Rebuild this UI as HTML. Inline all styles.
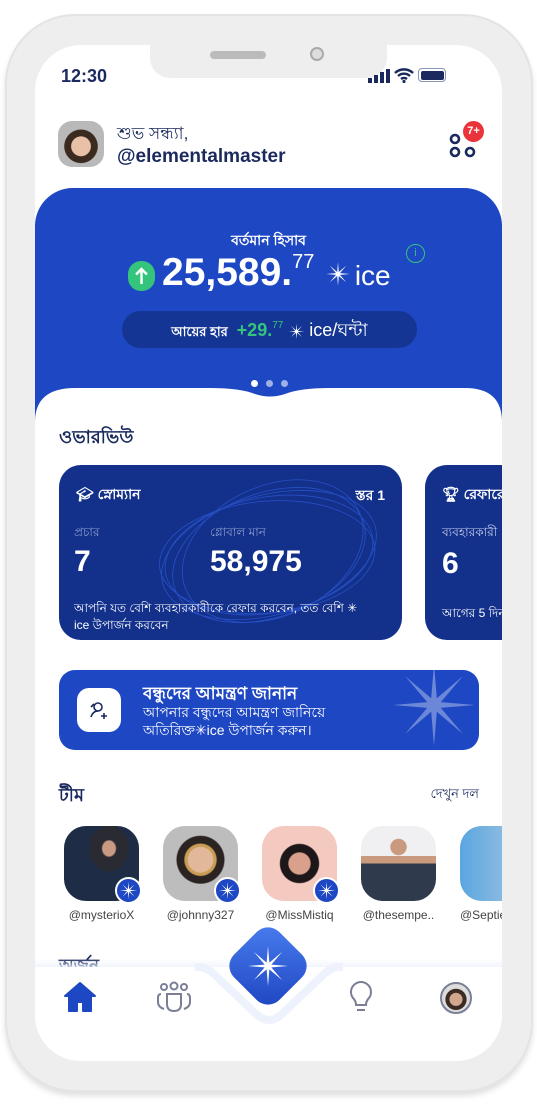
<!DOCTYPE html>
<html><head><meta charset="utf-8"><style>
*{margin:0;padding:0;box-sizing:border-box}
body{width:537px;height:1106px;background:#fff;position:relative;overflow:hidden;font-family:"Liberation Sans","DejaVu Sans",sans-serif;color:#1b2a5e}
.abs{position:absolute}
.frame{left:5px;top:14px;width:528px;height:1078px;border-radius:70px;background:#eeeeee;box-shadow:0 4px 6px rgba(0,0,0,.12),inset 0 0 0 2px #e4e4e4}
.screen{left:35px;top:45px;width:467px;height:1016px;border-radius:46px;background:#fff;overflow:hidden}
.b{font-weight:bold}
.star{display:inline-block;vertical-align:middle}
.bd{width:27px;height:27px;border-radius:50%;background:#1e47c3;border:2px solid #fff;display:flex;align-items:center;justify-content:center}
</style></head><body>
<div class="abs frame"></div>
<div class="abs screen">
  <!-- notch -->
  <div class="abs" style="left:115px;top:-2px;width:237px;height:35px;background:#eeeeee;border-radius:0 0 20px 20px"></div>
  <div class="abs" style="left:175px;top:6px;width:56px;height:8px;border-radius:4px;background:#bbb"></div>
  <div class="abs" style="left:275px;top:2px;width:14px;height:14px;border-radius:50%;background:#ddd;border:2px solid #aaa"></div>
  <div class="abs b" style="left:26px;top:21px;font-size:18px;color:#1b2a5e">12:30</div>
  <!-- signal -->
  <div class="abs" style="left:333px;top:33px;width:4px;height:5px;background:#1b2a5e"></div>
  <div class="abs" style="left:339px;top:30px;width:4px;height:8px;background:#1b2a5e"></div>
  <div class="abs" style="left:345px;top:27px;width:4px;height:11px;background:#1b2a5e"></div>
  <div class="abs" style="left:351px;top:24px;width:4px;height:14px;background:#1b2a5e"></div>
  <svg class="abs" style="left:359px;top:22px" width="20" height="16" viewBox="0 0 20 16"><path d="M1 6a13 13 0 0 1 18 0M4 9a9 9 0 0 1 12 0M7 12a5 5 0 0 1 6 0" stroke="#1b2a5e" stroke-width="2.4" fill="none"/><circle cx="10" cy="14.5" r="1.6" fill="#1b2a5e"/></svg>
  <div class="abs" style="left:383px;top:23px;width:28px;height:14px;border:1.5px solid #8a94b5;border-radius:4px;padding:1.5px"><div style="width:100%;height:100%;background:#1b2a5e;border-radius:2px"></div></div>
  <!-- header -->
  <div class="abs" style="left:23px;top:76px;width:46px;height:46px;border-radius:14px;background:radial-gradient(circle at 50% 55%,#e8c1a6 0 28%,#3b2a20 30% 48%,#b9b9b9 50%)"></div>
  <div class="abs" style="left:82px;top:76px;font-size:17px">শুভ সন্ধ্যা,</div>
  <div class="abs b" style="left:82px;top:101px;font-size:19px">@elementalmaster</div>
  <svg class="abs" style="left:412px;top:86px" width="32" height="28" viewBox="0 0 32 28"><g fill="none" stroke="#1b2a5e" stroke-width="2.6"><circle cx="8" cy="8" r="4"/><circle cx="8" cy="21" r="4"/><circle cx="23" cy="21" r="4"/></g></svg>
  <div class="abs b" style="left:428px;top:76px;width:21px;height:21px;border-radius:50%;background:#e8343a;color:#fff;font-size:11px;text-align:center;line-height:21px">7+</div>
  <!-- blue card -->
  <div class="abs" style="left:0;top:143px;width:467px;height:240px;background:#1e47c3;border-radius:38px 38px 0 0"></div>
  <div class="abs b" style="left:0;top:184px;width:467px;text-align:center;color:#fff;font-size:14px">বর্তমান হিসাব</div>
  <div class="abs" style="left:93px;top:216px;width:27px;height:30px;border-radius:13px;background:#34c47c"></div>
  <svg class="abs" style="left:98px;top:221px" width="17" height="20" viewBox="0 0 17 20"><path d="M8.5 18V3M3 8.5l5.5-5.5 5.5 5.5" stroke="#fff" stroke-width="2.4" fill="none"/></svg>
  <div class="abs" style="left:127px;top:206px;color:#fff;white-space:nowrap"><span class="b" style="font-size:39px">25,589.</span><span style="font-size:20px;vertical-align:17px">77</span>
   <svg class="star" width="26" height="26" viewBox="-11 -11 22 22" style="margin:0 4px 0 6px;vertical-align:-2px"><polygon fill="#fff" points="10,0 1.66,.69 7.07,7.07 .69,1.66 0,10 -.69,1.66 -7.07,7.07 -1.66,.69 -10,0 -1.66,-.69 -7.07,-7.07 -.69,-1.66 0,-10 .69,-1.66 7.07,-7.07 1.66,-.69"/></svg><span style="font-size:28px">ice</span></div>
  <div class="abs" style="left:371px;top:199px;width:19px;height:19px;border-radius:50%;border:1.5px solid #34c47c;color:#34c47c;font-size:11px;text-align:center;line-height:16px">i</div>
  <div class="abs" style="left:87px;top:266px;width:295px;height:37px;border-radius:19px;background:#143593"></div>
  <div class="abs" style="left:87px;top:271px;width:295px;text-align:center;color:#fff;white-space:nowrap"><span class="b" style="font-size:13px">আয়ের হার</span>&nbsp; <span style="color:#34c47c;font-size:18px" class="b">+29.</span><span style="color:#34c47c;font-size:10px;vertical-align:8px">77</span>
   <svg class="star" width="17" height="17" viewBox="-11 -11 22 22"><polygon fill="#fff" points="10,0 1.66,.69 7.07,7.07 .69,1.66 0,10 -.69,1.66 -7.07,7.07 -1.66,.69 -10,0 -1.66,-.69 -7.07,-7.07 -.69,-1.66 0,-10 .69,-1.66 7.07,-7.07 1.66,-.69"/></svg> <span style="font-size:18px">ice/ঘন্টা</span></div>
  <div class="abs" style="left:216px;top:335px;width:7px;height:7px;border-radius:50%;background:#fff"></div>
  <div class="abs" style="left:231px;top:335px;width:7px;height:7px;border-radius:50%;background:#9db0e8"></div>
  <div class="abs" style="left:246px;top:335px;width:7px;height:7px;border-radius:50%;background:#9db0e8"></div>
  <svg class="abs" style="left:0;top:335px" width="467" height="60" viewBox="0 0 467 60"><path d="M0 60V42Q0 8 40 8H175Q205 8 220 14Q235 19 250 14Q265 8 295 8H430Q467 8 467 42V60Z" fill="#fff"/></svg>
  <div class="abs" style="left:0;top:390px;width:467px;height:600px;background:#fff"></div>
  <div class="abs b" style="left:24px;top:378px;font-size:18px">ওভারভিউ</div>
  <!-- card1 -->
  <div class="abs" style="left:24px;top:420px;width:343px;height:175px;border-radius:22px;background:#13318b;overflow:hidden;color:#fff">
    <svg class="abs" style="left:90px;top:10px" width="240" height="160" viewBox="0 0 240 160"><g fill="none" stroke="#2d58d6" stroke-width=".8" opacity=".8"><ellipse cx="120" cy="80" rx="110" ry="60" transform="rotate(-15 120 80)"/><ellipse cx="120" cy="80" rx="105" ry="58" transform="rotate(-10 120 80)"/><ellipse cx="120" cy="80" rx="100" ry="62" transform="rotate(-20 120 80)"/><ellipse cx="125" cy="78" rx="95" ry="65" transform="rotate(-25 120 80)"/><ellipse cx="118" cy="82" rx="108" ry="56" transform="rotate(-5 120 80)"/></g></svg>
    <div class="abs b" style="left:17px;top:18px;font-size:14px">🎓︎ স্নোম্যান</div>
    <div class="abs b" style="right:17px;top:19px;font-size:14px">স্তর 1</div>
    <div class="abs" style="left:15px;top:59px;font-size:12px;color:#8c9dd0">প্রচার</div>
    <div class="abs" style="left:151px;top:59px;font-size:12px;color:#8c9dd0">গ্লোবাল মান</div>
    <div class="abs b" style="left:15px;top:80px;font-size:30px">7</div>
    <div class="abs b" style="left:151px;top:80px;font-size:30px">58,975</div>
    <div class="abs" style="left:15px;top:135px;width:300px;font-size:12px;line-height:17px">আপনি যত বেশি ব্যবহারকারীকে রেফার করবেন, তত বেশি ✳ ice উপার্জন করবেন</div>
  </div>
  <div class="abs" style="left:390px;top:420px;width:100px;height:175px;border-radius:22px;background:#13318b;color:#fff;overflow:hidden">
    <div class="abs b" style="left:17px;top:18px;font-size:14px;white-space:nowrap">🏆︎ রেফারেল</div>
    <div class="abs" style="left:17px;top:59px;font-size:12px;color:#c6cfee;white-space:nowrap">ব্যবহারকারী</div>
    <div class="abs b" style="left:17px;top:82px;font-size:30px">6</div>
    <div class="abs" style="left:17px;top:140px;font-size:12px;white-space:nowrap">আগের 5 দিন</div>
  </div>
  <!-- invite -->
  <div class="abs" style="left:24px;top:625px;width:420px;height:80px;border-radius:16px;background:#1e47c3;overflow:hidden;color:#fff">
    <svg class="abs" style="left:330px;top:-10px" width="90" height="90" viewBox="-11 -11 22 22" opacity=".35"><polygon fill="#fff" points="10,0 1.66,.69 7.07,7.07 .69,1.66 0,10 -.69,1.66 -7.07,7.07 -1.66,.69 -10,0 -1.66,-.69 -7.07,-7.07 -.69,-1.66 0,-10 .69,-1.66 7.07,-7.07 1.66,-.69"/></svg>
    <div class="abs" style="left:18px;top:18px;width:44px;height:44px;border-radius:12px;background:#fff"></div>
    <svg class="abs" style="left:28px;top:28px" width="24" height="24" viewBox="0 0 24 24"><g fill="none" stroke="#1b2a5e" stroke-width="1.6"><circle cx="11" cy="9" r="4"/><path d="M4 19q2-6 7-6M7 6l-3 3M17 15v6M14 18h6"/></g></svg>
    <div class="abs b" style="left:84px;top:11px;font-size:17px">বন্ধুদের আমন্ত্রণ জানান</div>
    <div class="abs" style="left:84px;top:33px;font-size:14px;line-height:18px">আপনার বন্ধুদের আমন্ত্রণ জানিয়ে<br>অতিরিক্ত✳ice উপার্জন করুন।</div>
  </div>
  <div class="abs b" style="left:24px;top:736px;font-size:18px">টীম</div>
  <div class="abs" style="right:23px;top:740px;font-size:13px">দেখুন দল</div>
  <!-- team -->
  <div class="abs" style="left:29px;top:781px;width:75px;height:75px;border-radius:22px;background:radial-gradient(ellipse at 60% 30%,#c89a82 0 10%,#2a2a33 12% 30%,#1e2c45 32%)"></div>
  <div class="abs" style="left:128px;top:781px;width:75px;height:75px;border-radius:22px;background:radial-gradient(circle at 50% 45%,#e2b89b 0 22%,#c99d54 24% 28%,#2a2322 30% 42%,#bdbdbd 44%)"></div>
  <div class="abs" style="left:227px;top:781px;width:75px;height:75px;border-radius:22px;background:radial-gradient(circle at 50% 50%,#d9a08c 0 20%,#1d1719 22% 36%,#f4c9c0 38%)"></div>
  <div class="abs" style="left:326px;top:781px;width:75px;height:75px;border-radius:22px;background:radial-gradient(circle at 50% 28%,#c99a7e 0 12%,transparent 13%),linear-gradient(#f0f0f2 0 40%,#c99a7e 40% 50%,#2f3a4c 50%)"></div>
  <div class="abs" style="left:425px;top:781px;width:45px;height:75px;border-radius:22px 0 0 22px;background:linear-gradient(90deg,#5aa6e0,#8bbbe0)"></div>
  <div class="abs bd" style="left:80px;top:832px"><svg width="19" height="19" viewBox="-11 -11 22 22"><polygon fill="#fff" points="10,0 1.66,.69 7.07,7.07 .69,1.66 0,10 -.69,1.66 -7.07,7.07 -1.66,.69 -10,0 -1.66,-.69 -7.07,-7.07 -.69,-1.66 0,-10 .69,-1.66 7.07,-7.07 1.66,-.69"/></svg></div>
  <div class="abs bd" style="left:179px;top:832px"><svg width="19" height="19" viewBox="-11 -11 22 22"><polygon fill="#fff" points="10,0 1.66,.69 7.07,7.07 .69,1.66 0,10 -.69,1.66 -7.07,7.07 -1.66,.69 -10,0 -1.66,-.69 -7.07,-7.07 -.69,-1.66 0,-10 .69,-1.66 7.07,-7.07 1.66,-.69"/></svg></div>
  <div class="abs bd" style="left:278px;top:832px"><svg width="19" height="19" viewBox="-11 -11 22 22"><polygon fill="#fff" points="10,0 1.66,.69 7.07,7.07 .69,1.66 0,10 -.69,1.66 -7.07,7.07 -1.66,.69 -10,0 -1.66,-.69 -7.07,-7.07 -.69,-1.66 0,-10 .69,-1.66 7.07,-7.07 1.66,-.69"/></svg></div>
  <div class="abs" style="left:29px;top:863px;width:75px;text-align:center;font-size:12px;color:#444">@mysterioX</div>
  <div class="abs" style="left:128px;top:863px;width:75px;text-align:center;font-size:12px;color:#444">@johnny327</div>
  <div class="abs" style="left:222px;top:863px;width:85px;text-align:center;font-size:12px;color:#444">@MissMistiq</div>
  <div class="abs" style="left:321px;top:863px;width:85px;text-align:center;font-size:12px;color:#444">@thesempe..</div>
  <div class="abs" style="left:425px;top:863px;font-size:12px;color:#444;white-space:nowrap">@Septie</div>
  <div class="abs b" style="left:24px;top:908px;font-size:17px">অর্জন</div>
  <!-- nav -->
  <div class="abs" style="left:0;top:914px;width:467px;height:10px;background:linear-gradient(rgba(238,242,252,0),#eef2fc)"></div>
  <div class="abs" style="left:0;top:922px;width:467px;height:100px;background:#fff"></div>
  <svg class="abs" style="left:160px;top:910px" width="148" height="80" viewBox="0 0 148 80"><path d="M0 12H4Q12 12 20 20L60 58Q74 72 88 58L128 20Q136 12 144 12H148" fill="none" stroke="#eef2fc" stroke-width="8"/></svg>
  <div class="abs" style="left:201px;top:889px;width:64px;height:64px;border-radius:16px;transform:rotate(45deg);background:linear-gradient(135deg,#4a7ef0,#1d44c0)"></div>
  <svg class="abs" style="left:211px;top:899px" width="44" height="44" viewBox="-11 -11 22 22"><polygon fill="#fff" points="10,0 1.66,.69 7.07,7.07 .69,1.66 0,10 -.69,1.66 -7.07,7.07 -1.66,.69 -10,0 -1.66,-.69 -7.07,-7.07 -.69,-1.66 0,-10 .69,-1.66 7.07,-7.07 1.66,-.69"/></svg>
  <svg class="abs" style="left:29px;top:936px" width="32" height="32" viewBox="0 0 32 32"><path d="M16 2L1 15h4v15h8v-9h6v9h8V15h4z" fill="#1e47c3" stroke="#1e47c3" stroke-linejoin="round" stroke-width="2"/></svg>
  <svg class="abs" style="left:122px;top:936px" width="34" height="32" viewBox="0 0 34 32"><g fill="none" stroke="#7a7f96" stroke-width="2"><circle cx="7" cy="6" r="3"/><circle cx="17" cy="5" r="3.5"/><circle cx="27" cy="6" r="3"/><path d="M4 13q-3 0-3 4v4q0 5 6 7M30 13q3 0 3 4v4q0 5-6 7M10 13h14v10q0 7-7 7t-7-7z"/></g></svg>
  <svg class="abs" style="left:313px;top:936px" width="26" height="34" viewBox="0 0 26 34"><path d="M8 24q0-4-3-7a10 10 0 1 1 16 0q-3 3-3 7zM9 29h8" fill="none" stroke="#7a7f96" stroke-width="2"/></svg>
  <div class="abs" style="left:405px;top:937px;width:32px;height:32px;border-radius:50%;border:2px solid #7a7f96;background:radial-gradient(circle at 50% 55%,#d3a78e 0 30%,#3b2b22 33% 50%,#ddd 52%)"></div>
</div>
</body></html>
